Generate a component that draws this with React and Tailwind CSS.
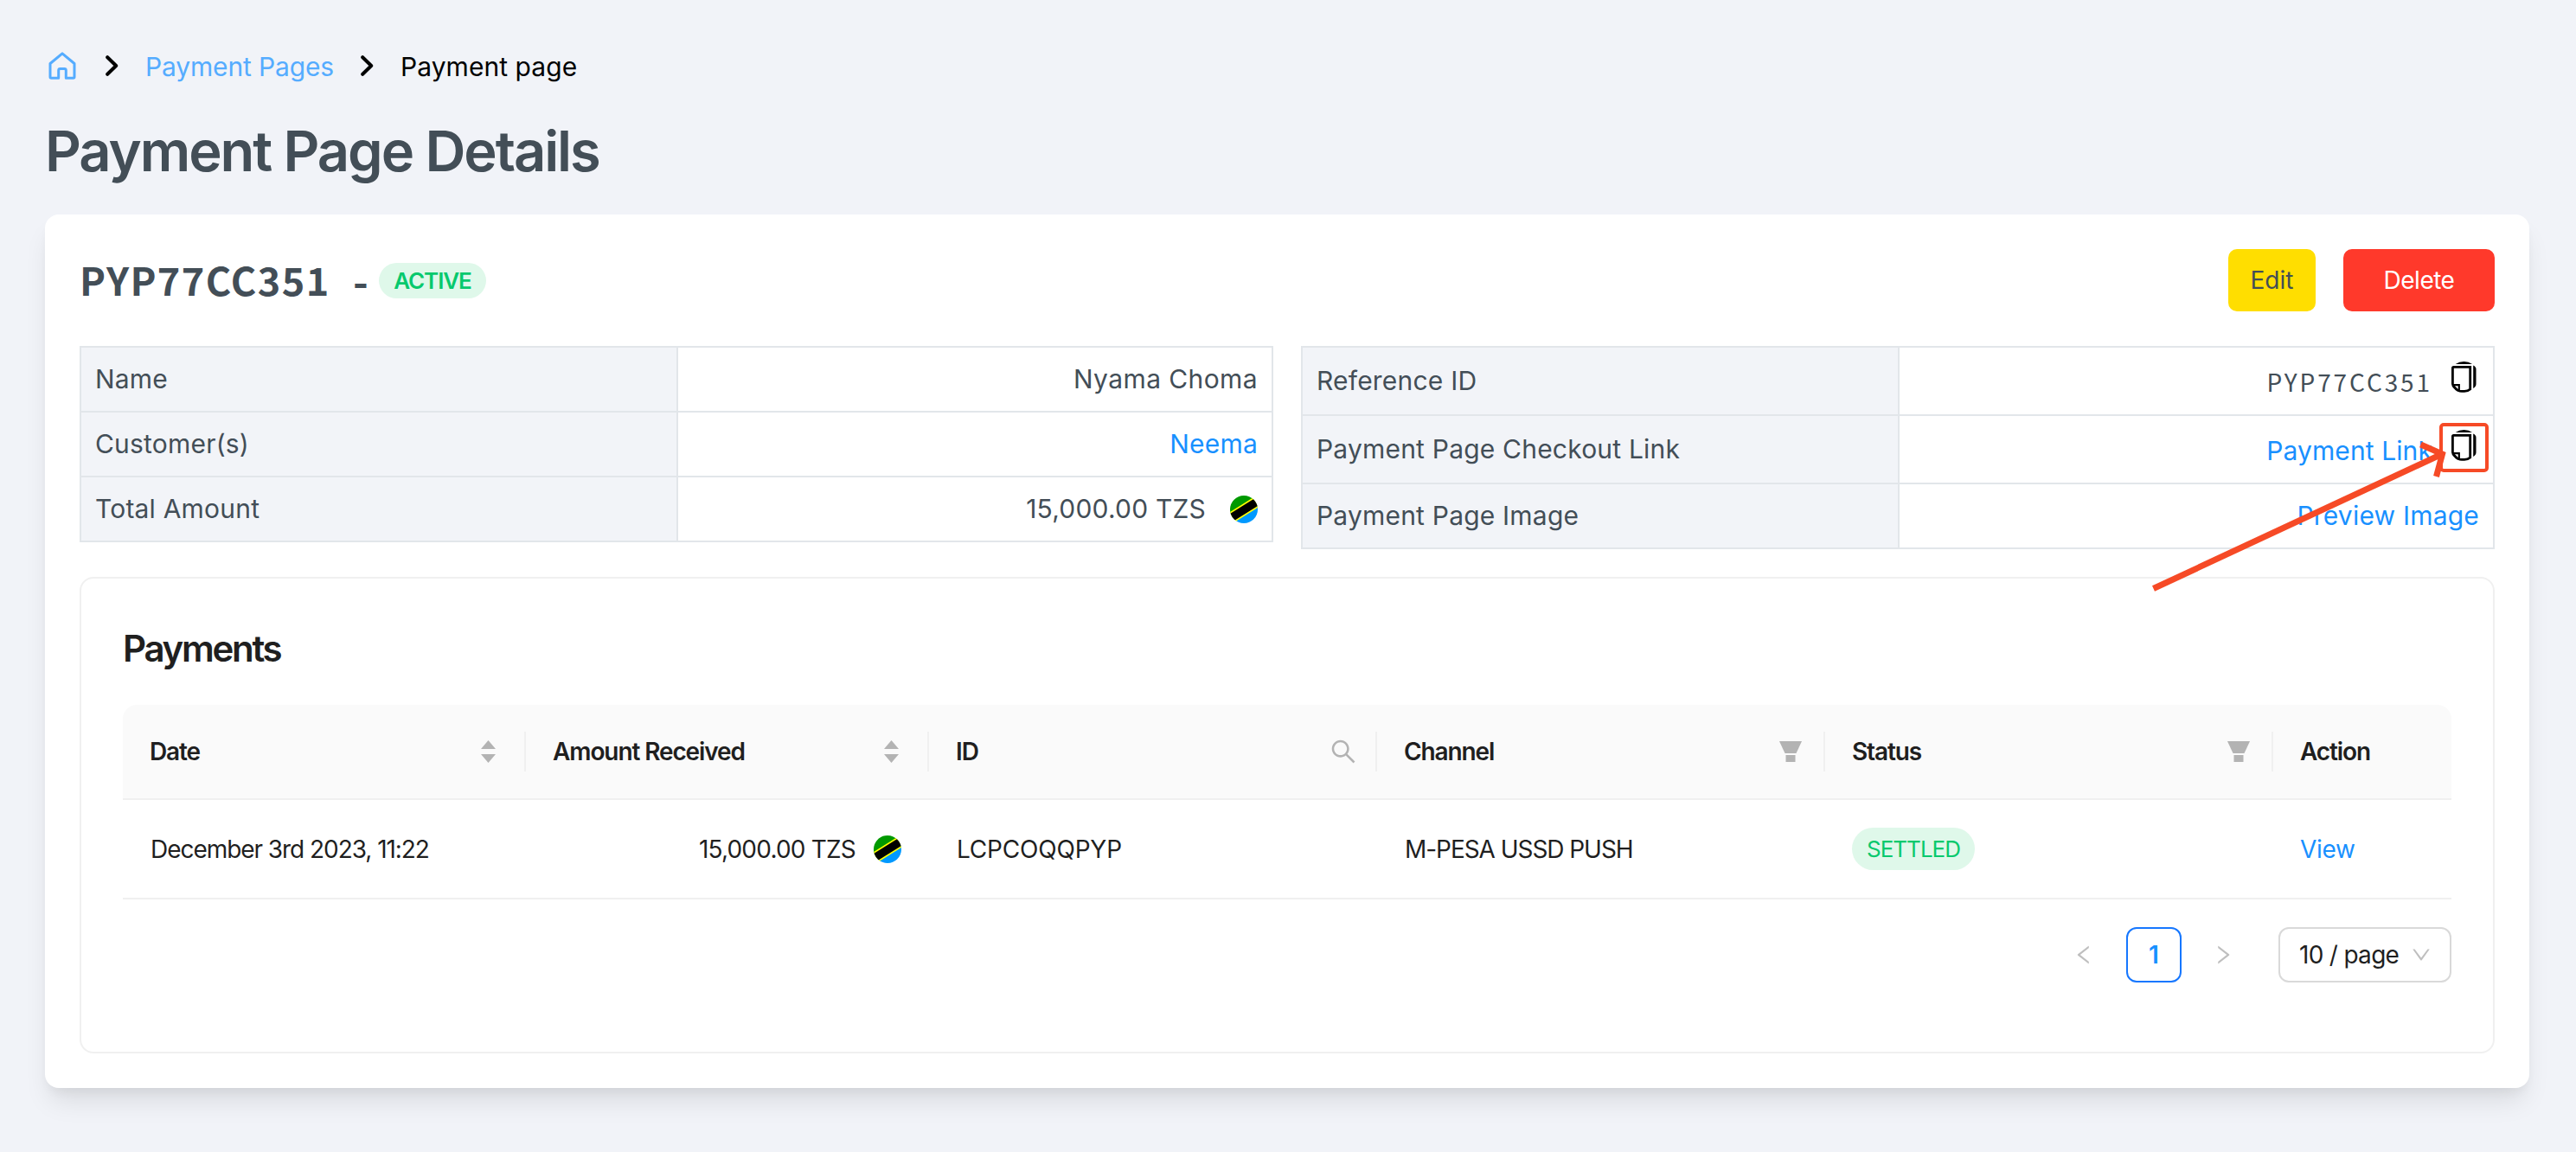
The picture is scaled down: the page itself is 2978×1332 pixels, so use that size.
import { AiOutlineLeft, AiOutlineRight, AiOutlineDown, AiOutlineSearch } from 'react-icons/ai';

const columns = [
  { title: 'Date', width: 'w-[466px]', kind: 'sort' },
  { title: 'Amount Received', width: 'w-[466px]', kind: 'sort' },
  { title: 'ID', width: 'w-[518px]', kind: 'search' },
  { title: 'Channel', width: 'w-[518px]', kind: 'filter' },
  { title: 'Status', width: 'w-[518px]', kind: 'filter' },
  { title: 'Action', width: 'w-[206px]', kind: '' },
];

function HomeIcon() {
  return (
    <svg viewBox="0 0 32 32" className="w-8 h-8 mb-[2px]" fill="none" stroke="#55acff" strokeWidth="3" strokeLinejoin="round">
      <path d="M16 1.8L30 13.500V29Q30 30.300 28.700 30.300H20.300V21.500Q20.300 19.600 18.500 19.600H13.500Q11.700 19.600 11.700 21.500V30.300H3.300Q2 30.300 2 29V13.500Z" />
    </svg>
  );
}

function Chevron() {
  return (
    <svg viewBox="0 0 15 24" className="w-[15px] h-6 mb-[2px]" fill="none" stroke="#000" strokeWidth="4" strokeLinecap="round" strokeLinejoin="round">
      <path d="M2.200 2.200L12.200 12L2.200 21.800" />
    </svg>
  );
}

function Flag() {
  return (
    <svg viewBox="0 0 32 32" className="w-8 h-8 shrink-0">
      <clipPath id="round"><circle cx="16" cy="16" r="16" /></clipPath>
      <g clipPath="url(#round)">
        <path d="M0 0H32V6L0 26Z" fill="#090" />
        <path d="M32 6V32H0V26Z" fill="#0099ff" />
        <path d="M-16 36.500L48 -3.500" stroke="#ff0" strokeWidth="12.800" />
        <path d="M-16 36.500L48 -3.500" stroke="#000" strokeWidth="9.400" />
      </g>
    </svg>
  );
}

function CopyIcon() {
  return (
    <svg viewBox="0 0 29 36" className="w-[29px] h-9 ml-[22px] mr-[3px] mb-[9px]" fill="none">
      <path d="M1.400 7.500Q1.400 6.400 2.500 6.400H21.700V32Q19 34.400 15 34.400H12Q7 34.400 4 30.500Q1.400 28 1.400 26Z" stroke="#000" strokeWidth="2.800" />
      <path d="M1.400 27.200H8.800V34" stroke="#000" strokeWidth="2.200" />
      <path d="M3 29L8 34" stroke="#000" strokeWidth="2.400" />
      <path d="M4.700 2.900Q9 0 14.500 0T24 2.900Z" fill="#000" />
      <path d="M25.200 4.500Q28.500 6 28.500 9V26Q28.500 29 25.200 31Z" fill="#000" />
    </svg>
  );
}

function HeaderIcon({ kind }) {
  if (kind === 'sort') {
    return (
      <svg viewBox="0 0 17 26" className="w-[17px] h-[26px] mr-[33px]" fill="#b3b3b3">
        <path d="M8.500 0L17 10H0Z" />
        <path d="M8.500 26L17 16H0Z" />
      </svg>
    );
  }
  if (kind === 'search') return <AiOutlineSearch className="w-[34px] h-[34px] mr-5 text-[#b3b3b3]" />;
  return (
    <svg viewBox="0 0 26 24" className="w-[26px] h-6 mr-[25px]" fill="#b3b3b3">
      <path d="M0 0H26L19.500 14H6.500Z" />
      <path d="M7.500 16H18.500V24H7.500Z" />
    </svg>
  );
}

function Row({ label, height, last, children }) {
  return (
    <div className={`flex ${height} ${last ? '' : 'border-b-2 border-[#e2e6ea]'}`}>
      <div className="w-[690px] shrink-0 bg-[#f2f4f8] border-r-2 border-[#e2e6ea] pl-4 flex items-center">{label}</div>
      <div className="flex-1 pr-4 flex items-center justify-end">{children}</div>
    </div>
  );
}

export default function App() {
  return (
    <div className="relative w-[2978px] h-[1332px] overflow-hidden bg-[#f1f3f8] pl-[52px] pr-[54px] font-['Inter',sans-serif] text-[#434e57]">
      <nav className="h-[154px] pl-1 flex items-center text-[30px] text-black">
        <HomeIcon />
        <span className="pl-[34px] pr-[31px]"><Chevron /></span>
        <span className="w-[249px] text-[#55acff] tracking-[-0.15px]">Payment Pages</span>
        <Chevron />
        <span className="pl-[31px] tracking-[0.05px]">Payment page</span>
      </nav>
      <h1 className="h-[94px] text-[65px] leading-[42px] tracking-[-2.05px] font-semibold">Payment Page Details</h1>

      <main className="h-[1010px] rounded-2xl bg-white px-10 pt-10 shadow-[0_20px_30px_-6px_rgba(0,0,0,0.1),0_8px_12px_-4px_rgba(0,0,0,0.05)]">
        <div className="h-[112px] flex items-start justify-between">
          <div className="h-[72px] flex items-center">
            <span className="w-[316px] pb-[3px] font-['Noto_Sans_CJK_SC',sans-serif] text-[45px] leading-none font-bold tracking-[1.4px]">PYP77CC351</span>
            <span className="w-[30px] pb-[3px] font-['Noto_Sans_CJK_SC',sans-serif] text-[48px] leading-none font-bold">-</span>
            <span className="w-[124px] h-[41px] flex items-center justify-center text-[26px] font-semibold tracking-[-1.1px] text-[#07c96d] bg-[#dff8ea] rounded-full">ACTIVE</span>
          </div>
          <div className="flex gap-8 text-[28px]">
            <button className="w-[101px] h-[72px] rounded-[10px] bg-[#ffde00]">Edit</button>
            <button className="w-[175px] h-[72px] rounded-[10px] bg-[#ff392b] text-white tracking-[-0.5px]">Delete</button>
          </div>
        </div>

        <div className="h-[267px] flex items-start justify-between text-[30px] tracking-[0.2px]">
          <section className="w-[1380px] border-2 border-[#e2e6ea]">
            <Row label="Name" height="h-[75px]"><span className="tracking-[0.4px]">Nyama Choma</span></Row>
            <Row label="Customer(s)" height="h-[75px]"><a className="text-[#1890ff]">Neema</a></Row>
            <Row label="Total Amount" height="h-[73px]" last><span className="mr-7">15,000.00 TZS</span><Flag /></Row>
          </section>
          <section className="w-[1380px] border-2 border-[#e2e6ea]">
            <Row label="Reference ID" height="h-[79px]">
              <span className="font-['Noto_Sans_CJK_SC',sans-serif] text-[28px] leading-none tracking-[2.9px]">PYP77CC351</span>
              <CopyIcon />
            </Row>
            <Row label="Payment Page Checkout Link" height="h-[79px]">
              <a className="pt-1 text-[#1890ff] tracking-[0.1px]">Payment Link</a>
              <CopyIcon />
            </Row>
            <Row label="Payment Page Image" height="h-[73px]" last><a className="text-[#1890ff]">Preview Image</a></Row>
          </section>
        </div>

        <section className="h-[551px] border-2 border-[#f0f0f0] rounded-2xl px-12 text-[28px] text-[#1f1f1f]">
          <h2 className="h-[146px] pt-14 text-[42px] leading-[50px] tracking-[-2.3px] font-semibold">Payments</h2>
          <div className="h-[110px] flex bg-[#fafafa] border-b-2 border-[#f0f0f0] rounded-t-2xl">
            {columns.map((c) => (
              <div key={c.title} className={`${c.width} pl-[31px] flex items-center font-semibold tracking-[-1.1px]`}>
                <span className="flex-1">{c.title}</span>
                {c.kind && <HeaderIcon kind={c.kind} />}
                {c.kind && <i className="w-[2px] h-[46px] bg-[#f0f0f0]" />}
              </div>
            ))}
          </div>
          <div className="h-[115px] flex items-center border-b-2 border-[#f0f0f0]">
            <span className="w-[466px] pl-8 tracking-[-1.05px]">December 3rd 2023, 11:22</span>
            <span className="w-[466px] pr-8 flex items-center justify-end gap-[21px] tracking-[-0.8px]">15,000.00 TZS <Flag /></span>
            <span className="w-[518px] pl-8 tracking-[-0.2px]">LCPCOQQPYP</span>
            <span className="w-[518px] pl-8 tracking-[-1.05px]">M-PESA USSD PUSH</span>
            <div className="w-[518px] pl-[31px]">
              <span className="w-[142px] h-[49px] flex items-center justify-center text-[26px] tracking-[-1px] text-[#07c96d] bg-[#dff8ea] rounded-full">SETTLED</span>
            </div>
            <a className="pl-[31px] tracking-[-0.3px] text-[#1890ff]">View</a>
          </div>
          <div className="pt-8 flex items-center justify-end">
            <AiOutlineLeft className="w-7 h-7 text-[#bfbfbf]" />
            <span className="w-16 h-16 ml-[35px] mr-[34px] flex items-center justify-center border-2 border-[#1677ff] rounded-xl font-semibold text-[#1890ff]">1</span>
            <AiOutlineRight className="w-7 h-7 text-[#bfbfbf]" />
            <div className="w-[200px] h-16 ml-[50px] pl-[22px] pr-[20px] flex items-center justify-between border-2 border-[#d9d9d9] rounded-xl tracking-[-0.7px]">
              10 / page
              <AiOutlineDown className="w-[26px] h-[26px] text-[#bfbfbf]" />
            </div>
          </div>
        </section>
      </main>

      {/* callout pointing at the checkout link copy button */}
      <div className="absolute left-[2820px] top-[489px] w-[57px] h-[57px] border-4 border-[#f64a26] rounded-[5px]" />
      <svg viewBox="0 0 350 180" className="absolute left-[2484px] top-[507px] w-[350px] h-[180px]" fill="none" stroke="#f64a26" strokeWidth="7">
        <path d="M5.500 173.500L338 18.500" />
        <path d="M314.500 7L339.500 18L332.500 44" />
      </svg>
    </div>
  );
}
